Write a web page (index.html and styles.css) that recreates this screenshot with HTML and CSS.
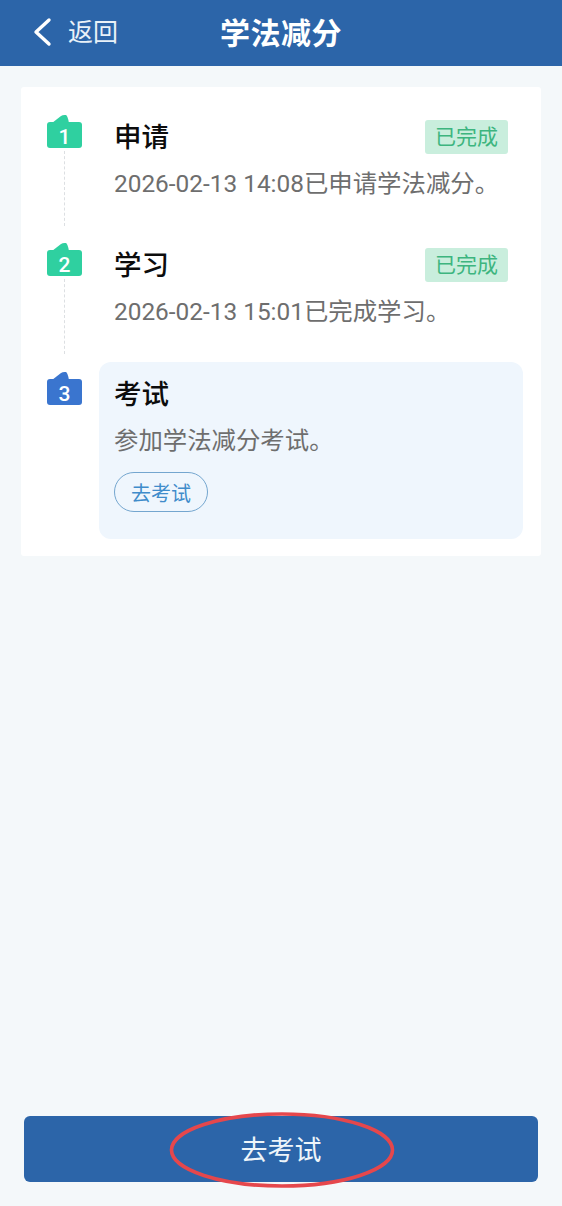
FILE: index.html
```html
<!DOCTYPE html>
<html lang="zh-CN">
<head>
    <meta charset="UTF-8">
    <meta name="viewport" content="width=device-width, initial-scale=1.0">
    <title>学法减分</title>
    <link rel="stylesheet" href="styles.css">
</head>
<body>
    <header class="top-bar">
        <a class="back-link" href="#">
            <svg class="back-icon" width="20" height="30" viewBox="0 0 20 30" fill="none">
                <path d="M17 3 L4 15 L17 27" stroke="#fff" stroke-width="3.4" stroke-linecap="round" stroke-linejoin="round"/>
            </svg>
            <span>返回</span>
        </a>
        <h1 class="page-title">学法减分</h1>
    </header>

    <main class="content">
        <section class="step-card">
            <div class="step">
                <div class="step-marker">
                    <div class="badge badge-green">
                        <svg class="badge-tab" width="17" height="9" viewBox="0 0 17 9"><path d="M0 9 L9 2 Q11 0.5 14 1 Q15.5 1.5 17 9 Z"/></svg>
                        1
                    </div>
                    <div class="step-line"></div>
                </div>
                <div class="step-body">
                    <div class="step-head">
                        <h2 class="step-title">申请</h2>
                        <span class="status-tag">已完成</span>
                    </div>
                    <p class="step-desc">2026-02-13 14:08已申请学法减分。</p>
                </div>
            </div>

            <div class="step">
                <div class="step-marker">
                    <div class="badge badge-green">
                        <svg class="badge-tab" width="17" height="9" viewBox="0 0 17 9"><path d="M0 9 L9 2 Q11 0.5 14 1 Q15.5 1.5 17 9 Z"/></svg>
                        2
                    </div>
                    <div class="step-line"></div>
                </div>
                <div class="step-body">
                    <div class="step-head">
                        <h2 class="step-title">学习</h2>
                        <span class="status-tag">已完成</span>
                    </div>
                    <p class="step-desc">2026-02-13 15:01已完成学习。</p>
                </div>
            </div>

            <div class="step step-current">
                <div class="step-marker">
                    <div class="badge badge-blue">
                        <svg class="badge-tab" width="17" height="9" viewBox="0 0 17 9"><path d="M0 9 L9 2 Q11 0.5 14 1 Q15.5 1.5 17 9 Z"/></svg>
                        3
                    </div>
                </div>
                <div class="step-body">
                    <div class="step-head">
                        <h2 class="step-title">考试</h2>
                    </div>
                    <p class="step-desc">参加学法减分考试。</p>
                    <button class="exam-pill" type="button">去考试</button>
                </div>
            </div>
        </section>
    </main>

    <footer class="bottom-bar">
        <button class="exam-button" type="button">
            去考试
            <svg class="annotation" width="226" height="78" viewBox="0 0 226 78" fill="none">
                <ellipse cx="113" cy="39" rx="110.5" ry="36" stroke="#e5474c" stroke-width="3.6"/>
            </svg>
        </button>
    </footer>
</body>
</html>
```

FILE: styles.css
```css
* {
    box-sizing: border-box;
}

body {
    margin: 0;
    width: 562px;
    height: 1206px;
    display: flex;
    flex-direction: column;
    background-color: #f4f8fa;
    font-family: Roboto, "Noto Sans CJK SC", sans-serif;
    overflow: hidden;
}

.top-bar {
    height: 66px;
    padding-bottom: 4px;
    background-color: #2c65a9;
    color: #fff;
    position: relative;
    display: flex;
    align-items: center;
    justify-content: center;
}

.back-link {
    position: absolute;
    left: 32px;
    top: 17px;
    display: flex;
    align-items: center;
    gap: 16px;
    color: #e9f1f8;
    font-size: 25px;
    line-height: 30px;
    text-decoration: none;
}

.back-link span {
    position: relative;
    top: 1px;
}

.page-title {
    margin: 0;
    font-size: 30px;
    font-weight: 700;
    letter-spacing: 0.5px;
}

.content {
    flex: 1;
    padding: 21px 21px 0;
}

.step-card {
    background-color: #fff;
    border-radius: 3px;
    padding: 18px 18px 17px 26px;
}

.step {
    display: flex;
    gap: 17px;
    height: 128px;
}

.step-current {
    height: 177px;
    margin-top: 1px;
}

.step-marker {
    width: 35px;
    flex-shrink: 0;
    display: flex;
    flex-direction: column;
    align-items: center;
    padding-top: 17px;
}

.badge {
    position: relative;
    width: 35px;
    height: 26px;
    border-radius: 3px;
    color: #fff;
    font-size: 21px;
    font-weight: 500;
    line-height: 30px;
    text-align: center;
}

.badge-tab {
    position: absolute;
    left: 5px;
    top: -8px;
}

.badge-green {
    background-color: #2fd0a0;
    fill: #2fd0a0;
}

.badge-blue {
    background-color: #3a75cf;
    fill: #3a75cf;
}

.step-line {
    height: 75px;
    margin-top: 3px;
    border-left: 1px dashed #dcdfe2;
}

.step-body {
    flex: 1;
    padding: 15px 15px 0 15px;
    border-radius: 12px;
}

.step-current .step-body {
    background-color: #eff6fd;
}

.step-head {
    display: flex;
    justify-content: space-between;
    align-items: center;
    height: 34px;
}

.step-title {
    margin: 0;
    position: relative;
    top: -2px;
    font-size: 27.5px;
    font-weight: 500;
    color: #0c0c0c;
}

.status-tag {
    width: 83px;
    height: 34px;
    border-radius: 3px;
    background-color: #c9eedd;
    color: #3db57f;
    font-size: 21px;
    line-height: 34px;
    text-align: center;
}

.step-desc {
    margin: 13px 0 0;
    font-size: 24.4px;
    line-height: 34px;
    color: #6e6e6e;
    white-space: nowrap;
}

.exam-pill {
    display: block;
    width: 94px;
    height: 40px;
    margin: 14px 0 0;
    padding: 0;
    border: 1px solid #74a6cf;
    border-radius: 20px;
    background: transparent;
    color: #3f8ccb;
    font-family: inherit;
    font-size: 20px;
}

.bottom-bar {
    padding: 0 24px 24px;
}

.exam-button {
    position: relative;
    display: block;
    width: 100%;
    height: 66px;
    padding: 0 0 2px;
    border: none;
    border-radius: 6px;
    background-color: #2c65a9;
    color: #eef5fa;
    font-family: inherit;
    font-size: 27px;
}

.annotation {
    position: absolute;
    left: 145px;
    top: -5px;
}
```
